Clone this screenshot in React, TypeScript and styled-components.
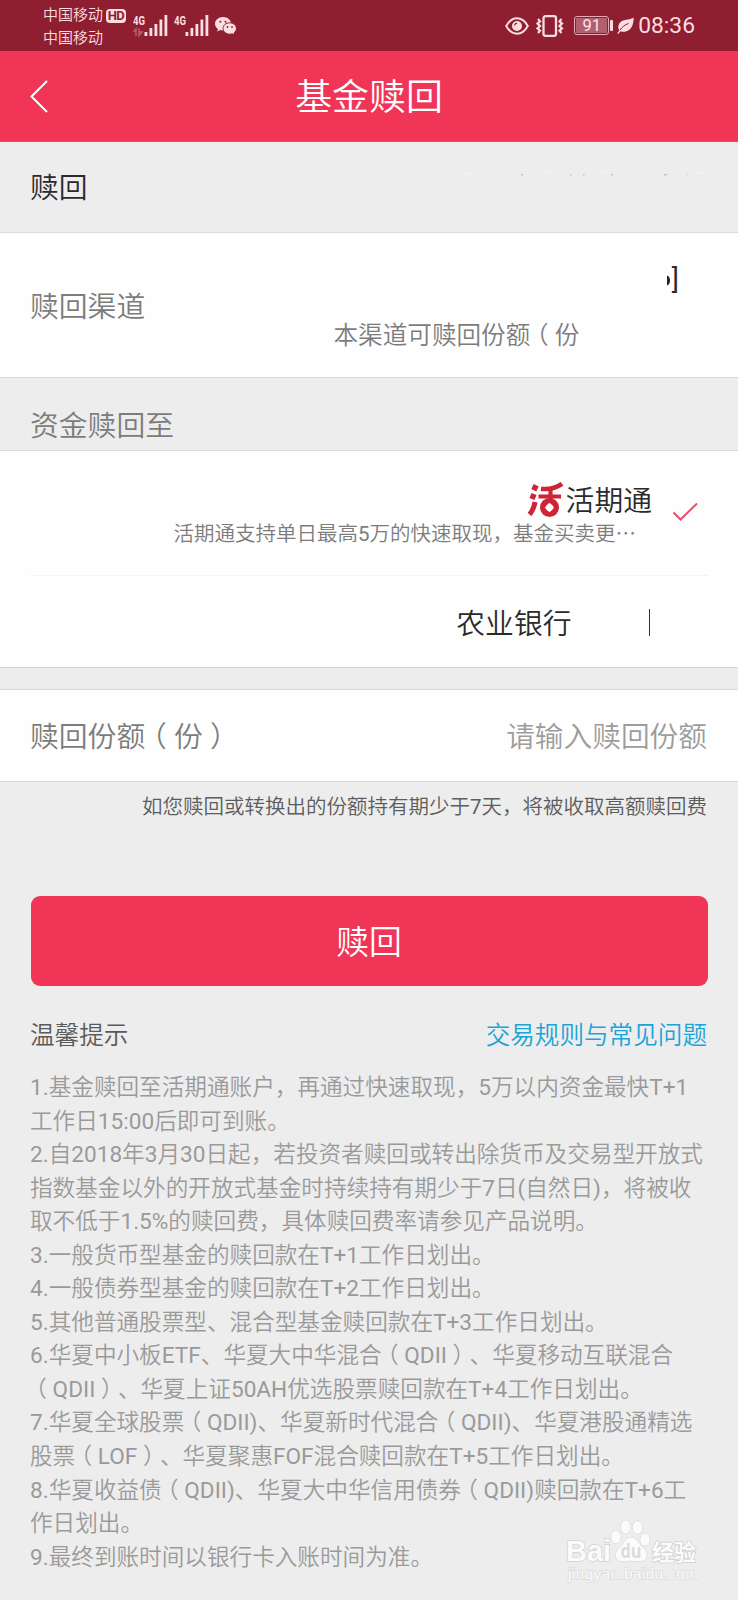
import React from "react";
import styled, { createGlobalStyle } from "styled-components";

const GlobalStyle = createGlobalStyle`
  * { box-sizing: border-box; }
  body {
    margin: 0;
    background: #ededed;
    font-family: Roboto, "Noto Sans CJK SC DemiLight", "Noto Sans CJK SC", sans-serif;
    font-weight: 400;
    text-spacing-trim: space-all;
  }
`;

const Screen = styled.main`
  position: relative;
  width: 738px;
  height: 1600px;
  overflow: hidden;
  background: #ededed;
  white-space: nowrap;
`;

const StatusBar = styled.div`
  display: flex;
  justify-content: space-between;
  height: 51px;
  padding: 0 43px 0 43px;
  background: #8f1f30;
  color: #fbdde2;
`;

const StatusLeft = styled.div`
  display: flex;
  align-items: flex-start;
`;

const Carriers = styled.div`
  display: flex;
  flex-direction: column;
  padding-top: 4px;
  font-size: 15px;
  line-height: 22.5px;
`;

const HdBadge = styled.span`
  width: 20px;
  height: 14px;
  margin: 9px 7px 0 3px;
  border-radius: 4px;
  background: #fbdde2;
  color: #8f1f30;
  font-size: 13px;
  line-height: 14px;
  font-weight: 700;
  text-align: center;
  letter-spacing: -0.5px;
`;

const StatusRight = styled.div`
  display: flex;
  align-items: center;
`;

const Battery = styled.span`
  display: flex;
  align-items: center;
  margin: 0 4px 0 10px;
`;

const BatteryBody = styled.span`
  width: 35px;
  height: 19px;
  border: 1.5px solid #e9a9b4;
  border-radius: 3px;
  padding: 1px;
`;

const BatteryLevel = styled.span`
  display: block;
  height: 15px;
  background: #b25f6f;
  color: #fbe6e9;
  font-size: 16.5px;
  line-height: 16px;
  text-align: center;
`;

const BatteryTip = styled.span`
  width: 3px;
  height: 11px;
  margin-left: 1px;
  border-radius: 1px;
  background: #fbdde2;
`;

const Clock = styled.span`
  margin-left: 4px;
  font-size: 22.8px;
  line-height: 53px;
`;

const Header = styled.header`
  display: grid;
  grid-template-columns: 80px 1fr 80px;
  align-items: center;
  height: 91px;
  background: #f03556;
  border-bottom: 1px solid #d9506b;
  color: #fff;
`;

const BackButton = styled.button`
  display: flex;
  align-items: center;
  height: 90px;
  padding: 0 0 0 29px;
  border: 0;
  background: none;
`;

const Title = styled.h1`
  margin: 0;
  padding-top: 3px;
  text-align: center;
  font-size: 36.9px;
  line-height: 87px;
  font-weight: 400;
`;

const SectionBar = styled.div<{ $h: number; $top: number; $color?: string }>`
  display: flex;
  justify-content: space-between;
  height: ${(p) => p.$h}px;
  padding: ${(p) => p.$top}px 30px 0;
  border-bottom: 1px solid #dadada;
  font-size: 28.8px;
  line-height: 40px;
  color: ${(p) => p.$color ?? "#2a2a2a"};
`;

const Panel = styled.section`
  background: #fefefe;
  border-bottom: 1px solid #d8d8d8;
`;

const ChannelRow = styled(Panel)`
  display: flex;
  justify-content: space-between;
  height: 145px;
  padding: 0 30px;
`;

const Label = styled.span<{ $drop?: number }>`
  align-self: center;
  padding-top: ${(p) => p.$drop ?? 0}px;
  font-size: 28.8px;
  line-height: 40px;
  color: #7c7c7c;
`;

const ChannelInfo = styled.div`
  display: flex;
  flex-direction: column;
  width: 374.5px;
`;

const ChannelName = styled.span`
  display: flex;
  justify-content: flex-end;
  align-items: center;
  gap: 1.5px;
  margin-top: 27px;
  padding-right: 29px;
  font-size: 27px;
  line-height: 40px;
  color: #2a2a2a;
`;

const ChannelShares = styled.span`
  margin-top: 18px;
  font-size: 24.6px;
  line-height: 36px;
  color: #7c7c7c;
`;

const FullParen = styled.span`
  padding: 0 0.25em;
  font-feature-settings: "halt";
`;

const AccountRow = styled.div`
  display: flex;
  justify-content: flex-end;
  height: 125px;
  margin: 0 30px;
  border-bottom: 1px solid #f4f4f4;
`;

const AccountText = styled.div`
  display: flex;
  flex-direction: column;
  align-items: flex-end;
`;

const AccountName = styled.span`
  display: flex;
  align-items: flex-start;
  height: 39px;
  margin-top: 31px;
  gap: 2px;
  font-size: 28.8px;
  line-height: 38px;
  color: #2a2a2a;
`;

const AccountNote = styled.span`
  width: 478.5px;
  font-size: 20.5px;
  line-height: 26px;
  color: #7c7c7c;
`;

const CheckSlot = styled.span`
  display: flex;
  width: 56px;
  padding: 51px 0 0 20px;
`;

const BankRow = styled.div`
  display: flex;
  align-items: center;
  justify-content: flex-end;
  height: 91px;
  padding: 0 88px 1px 0;
  font-size: 28.8px;
  color: #2a2a2a;
`;

const Separator = styled.span`
  width: 1.5px;
  height: 27px;
  margin: 3px 0 0 77px;
  background: #333;
`;

const Spacer = styled.div`
  height: 22px;
  border-bottom: 1px solid #dadada;
`;

const AmountRow = styled(Panel)`
  display: flex;
  justify-content: space-between;
  align-items: center;
  height: 92px;
  padding: 2px 31px 0 30px;
`;

const Placeholder = styled.span`
  font-size: 28.7px;
  line-height: 40px;
  color: #9c9c9c;
`;

const FeeNote = styled.p`
  margin: 11px 31px 0;
  text-align: right;
  font-size: 20.5px;
  line-height: 29px;
  color: #5c5c5c;
`;

const SubmitButton = styled.button`
  display: block;
  width: 677px;
  height: 90px;
  margin: 74px 0 0 30.5px;
  padding: 0 0 3px;
  border: 0;
  border-radius: 9px;
  background: #f03556;
  color: #fff;
  font-family: inherit;
  font-size: 32.8px;
`;

const TipsHead = styled.div`
  display: flex;
  justify-content: space-between;
  margin: 32px 31px 0 30px;
  font-size: 24.6px;
  line-height: 36px;
  color: #5a5a5a;
`;

const RulesLink = styled.a`
  color: #1ba4d6;
`;

const Tips = styled.div`
  margin: 17px 0 0 30px;
  font-size: 22.62px;
  line-height: 33.55px;
  color: #9a9a9a;
`;

const TipLine = styled.div``;

const Watermark = styled.div`
  position: absolute;
  left: 566px;
  top: 1518px;
`;

const LINES = [
  "1.基金赎回至活期通账户，再通过快速取现，5万以内资金最快T+1",
  "工作日15:00后即可到账。",
  "2.自2018年3月30日起，若投资者赎回或转出除货币及交易型开放式",
  "指数基金以外的开放式基金时持续持有期少于7日(自然日)，将被收",
  "取不低于1.5%的赎回费，具体赎回费率请参见产品说明。",
  "3.一般货币型基金的赎回款在T+1工作日划出。",
  "4.一般债券型基金的赎回款在T+2工作日划出。",
  "5.其他普通股票型、混合型基金赎回款在T+3工作日划出。",
  "6.华夏中小板ETF、华夏大中华混合（QDII）、华夏移动互联混合",
  "（QDII）、华夏上证50AH优选股票赎回款在T+4工作日划出。",
  "7.华夏全球股票（QDII)、华夏新时代混合（QDII)、华夏港股通精选",
  "股票（LOF）、华夏聚惠FOF混合赎回款在T+5工作日划出。",
  "8.华夏收益债（QDII)、华夏大中华信用债券（QDII)赎回款在T+6工",
  "作日划出。",
  "9.最终到账时间以银行卡入账时间为准。",
];

/* Full-width parentheses sit in the middle of their cell. */
const CjkText = ({ text }: { text: string }) => (
  <>
    {text
      .split(/([（）])/)
      .map((part, i) =>
        part === "（" || part === "）" ? <FullParen key={i}>{part}</FullParen> : part
      )}
  </>
);

const Signal = ({ arrows }: { arrows?: boolean }) => (
  <svg width="41" height="51" viewBox="0 0 41 51" fill="#fbdde2">
    <text x="0" y="24.500" fontSize="13.500" fontWeight="700" textLength="12" lengthAdjust="spacingAndGlyphs">
      4G
    </text>
    {arrows && (
      <path d="M3 36v-7l-2.500 3M6 28.500v7l3-3.500h-2" stroke="#b8616f" strokeWidth="1.500" fill="none" />
    )}
    <rect x="11.500" y="32" width="2.800" height="4" />
    <rect x="16.500" y="28" width="2.800" height="8" />
    <rect x="21.500" y="24" width="2.800" height="12" />
    <rect x="26.500" y="19.500" width="2.800" height="16.500" />
    <rect x="31.500" y="15" width="2.800" height="21" />
  </svg>
);

const WeChat = () => (
  <svg width="22" height="51" viewBox="0 0 22 51">
    <path d="M8 17c-4.400 0-8 3-8 6.700 0 2.200 1.200 4.100 3 5.300l-.8 2.600 3-1.500c1 .3 2 .4 3 .4 4.300 0 7.900-3 7.900-6.800S12.400 17 8 17z" fill="#fbdde2" />
    <path d="M14.700 22.800c-3.700 0-6.600 2.500-6.600 5.700s2.900 5.700 6.600 5.700c.9 0 1.700-.1 2.500-.4l2.400 1.300-.6-2.200c1.500-1.100 2.400-2.600 2.400-4.400 0-3.200-3-5.700-6.700-5.700z" fill="#fbdde2" stroke="#8f1f30" strokeWidth="1" />
    <g fill="#8f1f30">
      <circle cx="5.300" cy="21.700" r="1" />
      <circle cx="10.500" cy="21.700" r="1" />
      <circle cx="12.500" cy="27" r=".9" />
      <circle cx="17" cy="27" r=".9" />
    </g>
  </svg>
);

const Eye = styled(({ className }: { className?: string }) => (
  <svg className={className} width="24" height="18" viewBox="0 0 24 18">
    <path d="M1.200 9C4 4 7.800 1.300 12 1.300S20 4 22.800 9C20 14 16.200 16.700 12 16.700S4 14 1.200 9z" fill="none" stroke="#fbdde2" strokeWidth="2" />
    <circle cx="12" cy="9" r="5" fill="#fbdde2" />
    <path d="M9.500 8.500a2.800 2.800 0 0 1 2.600-2.300" fill="none" stroke="#8f1f30" strokeWidth="1.300" />
  </svg>
))`
  margin-right: 7px;
`;

const Vibrate = () => (
  <svg width="28" height="22" viewBox="0 0 28 22" fill="none" stroke="#fbdde2">
    <rect x="7.500" y="1.200" width="12.500" height="19.600" rx="2" strokeWidth="2.300" />
    <path d="M2 4l2 2.300-2.500 2.300L4 11l-2.500 2.400L4 15.700 2 18M25.500 4l-2 2.300L26 8.600 23.500 11l2.500 2.400-2.500 2.300 2 2.300" strokeWidth="2.200" />
  </svg>
);

const Leaf = () => (
  <svg width="17" height="18" viewBox="0 0 17 18">
    <path d="M16.700.5C16.500 6 15.500 10.500 12 13 9.500 14.900 6 15.200 3.600 14.200L1.200 17 .3 16.200l2-2.800C.3 10 1.500 6 5 4 8.500 2 13 3 16.700.5z" fill="#fbdde2" />
    <path d="M3 13C5 10 7.500 8 11.500 6.500" stroke="#8f1f30" strokeWidth="1" fill="none" />
  </svg>
);

const HuoLogo = () => (
  <svg width="37" height="36" viewBox="0 0 37 36" fill="none" stroke="#cf2436">
    <path d="M5.500 4.500l5 2.500M3.500 13.500l5 2" strokeWidth="5.500" />
    <path d="M2.500 32.500c2.800-3.200 4.600-7.200 5.600-12.500" strokeWidth="5" />
    <path d="M14 6.800c8 1 15-.8 21-5" strokeWidth="4.600" />
    <path d="M11.500 14.500H34M23.500 6v11" strokeWidth="4.200" />
    <circle cx="22.500" cy="25.500" r="6.500" strokeWidth="6" />
    <path d="M22.500 20.800l4.700 4.700-4.700 4.700-4.700-4.700z" fill="#fff" stroke="none" />
  </svg>
);

const Specks = () => (
  <svg width="250" height="9" viewBox="0 -3 250 9">
    <g fill="#f3f3f3">
      <rect x="2" y="2" width="9" height="1.500" />
      <rect x="81" y="1" width="14" height="1" />
      <rect x="138" y="1" width="12" height="1" />
      <rect x="238" y="1" width="9" height="1.500" />
    </g>
    <g fill="#c4c4c4">
      <rect x="63" y="3" width="2" height="1.500" />
      <rect x="112" y="3" width="1.500" height="1.500" />
      <rect x="125" y="3" width="1.500" height="1.500" />
      <rect x="153" y="3" width="2" height="1.500" />
      <rect x="206" y="3" width="3" height="1.500" />
      <rect x="229" y="3" width="1.500" height="1" />
    </g>
  </svg>
);

const BaiduMark = () => (
  <svg width="136" height="68" viewBox="0 0 136 68" fill="#fbfbfb" stroke="#d2d2d2" strokeWidth="1" paintOrder="stroke">
    <g strokeWidth="1.600">
      <text x="0" y="43" fontSize="29" fontWeight="700" fontFamily="Liberation Sans, sans-serif" textLength="45" lengthAdjust="spacingAndGlyphs">
        Bai
      </text>
      <text x="86" y="42" fontSize="22" fontWeight="700" fontFamily="Noto Sans CJK SC, sans-serif" textLength="44" lengthAdjust="spacingAndGlyphs">
        经验
      </text>
    </g>
    <ellipse cx="50" cy="19" rx="4.800" ry="6.500" />
    <ellipse cx="59.700" cy="9" rx="4.800" ry="6.800" />
    <ellipse cx="71.500" cy="9.500" rx="4.800" ry="6.500" />
    <ellipse cx="79" cy="21.500" rx="4.800" ry="6.200" />
    <path d="M65 19.500c5 0 7.500 5 11 9 3.500 3.500 5.500 6 4.500 10-1.200 4.500-5 5.300-9 4.800-4-.6-9-.6-13 0-4 .5-8-.6-8.600-5-.5-4 2-6.600 5-10 3.600-4 5.600-8.800 10.100-8.800z" />
    <text x="54.500" y="40" fontSize="19" fontWeight="700" fontFamily="Open Sans, sans-serif" textLength="21" lengthAdjust="spacingAndGlyphs" fill="#dcdcdc" stroke="none">
      du
    </text>
    <text x="2" y="60.500" fontSize="15.500" fontFamily="Liberation Sans, sans-serif" textLength="130" stroke="#dadada" strokeWidth="1.300">
      jingyan.baidu.com
    </text>
  </svg>
);

export default function App() {
  return (
    <Screen>
      <GlobalStyle />
      <StatusBar>
        <StatusLeft>
          <Carriers>
            <span>中国移动</span>
            <span>中国移动</span>
          </Carriers>
          <HdBadge>HD</HdBadge>
          <Signal arrows />
          <Signal />
          <WeChat />
        </StatusLeft>
        <StatusRight>
          <Eye />
          <Vibrate />
          <Battery>
            <BatteryBody>
              <BatteryLevel>91</BatteryLevel>
            </BatteryBody>
            <BatteryTip />
          </Battery>
          <Leaf />
          <Clock>08:36</Clock>
        </StatusRight>
      </StatusBar>

      <Header>
        <BackButton aria-label="返回">
          <svg width="20" height="34" viewBox="0 0 20 34" fill="none" stroke="#fff" strokeWidth="2">
            <path d="M18 2L2.500 17.500 18 33" />
          </svg>
        </BackButton>
        <Title>基金赎回</Title>
      </Header>

      <SectionBar $h={91} $top={26}>
        <span>赎回</span>
        <Specks />
      </SectionBar>

      <ChannelRow>
        <Label $drop={3}>赎回渠道</Label>
        <ChannelInfo>
          <ChannelName>
            <svg width="3" height="11" viewBox="0 0 3 11">
              <path d="M0 .5C4 1.500 4 9.500 0 10.500z" fill="#222" />
            </svg>
            ]
          </ChannelName>
          <ChannelShares>
            <CjkText text="本渠道可赎回份额（份" />
          </ChannelShares>
        </ChannelInfo>
      </ChannelRow>

      <SectionBar $h={73} $top={28} $color="#7c7c7c">
        <span>资金赎回至</span>
      </SectionBar>

      <Panel>
        <AccountRow>
          <AccountText>
            <AccountName>
              <HuoLogo />
              活期通
            </AccountName>
            <AccountNote>活期通支持单日最高5万的快速取现，基金买卖更⋯</AccountNote>
          </AccountText>
          <CheckSlot>
            <svg width="26" height="20" viewBox="0 0 26 20" fill="none" stroke="#e4506c" strokeWidth="2">
              <path d="M1.500 10.500L8.500 17.500 25 1.500" />
            </svg>
          </CheckSlot>
        </AccountRow>
        <BankRow>
          农业银行
          <Separator />
        </BankRow>
      </Panel>

      <Spacer />

      <AmountRow>
        <Label>
          <CjkText text="赎回份额（份）" />
        </Label>
        <Placeholder>请输入赎回份额</Placeholder>
      </AmountRow>

      <FeeNote>如您赎回或转换出的份额持有期少于7天，将被收取高额赎回费</FeeNote>

      <SubmitButton>赎回</SubmitButton>

      <TipsHead>
        <span>温馨提示</span>
        <RulesLink>交易规则与常见问题</RulesLink>
      </TipsHead>

      <Tips>
        {LINES.map((line) => (
          <TipLine key={line}>
            <CjkText text={line} />
          </TipLine>
        ))}
      </Tips>

      <Watermark>
        <BaiduMark />
      </Watermark>
    </Screen>
  );
}
